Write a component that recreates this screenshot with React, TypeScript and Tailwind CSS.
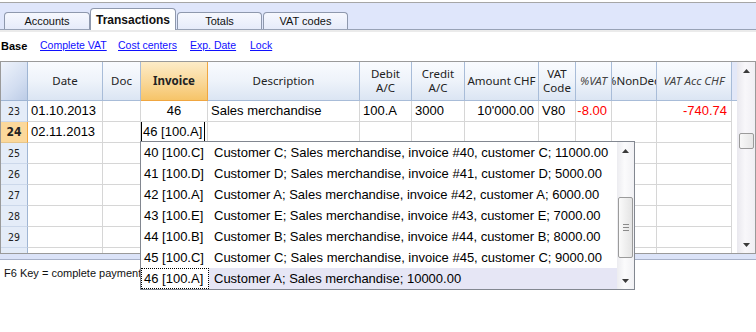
import React from "react";

const W = [27, 75, 38, 67, 152, 52, 53, 74, 37, 36, 45, 75];

function Tri({ down = false }: { down?: boolean }) {
  return (
    <svg width="7" height="4" viewBox="0 0 7 4">
      {down ? <path d="M0 0H7L3.5 4Z" fill="#3a3a3a" /> : <path d="M0 4H7L3.5 0Z" fill="#3a3a3a" />}
    </svg>
  );
}

type Cell = { t?: string; align?: "l" | "r" | "c"; red?: boolean };

const rows: { n: string; cur?: boolean; cells: Cell[] }[] = [
  {
    n: "23",
    cells: [
      { t: "01.10.2013" },
      {},
      { t: "46", align: "c" },
      { t: "Sales merchandise" },
      { t: "100.A" },
      { t: "3000" },
      { t: "10'000.00", align: "r" },
      { t: "V80" },
      { t: "-8.00", align: "r", red: true },
      {},
      { t: "-740.74", align: "r", red: true },
    ],
  },
  { n: "24", cur: true, cells: [{ t: "02.11.2013" }, {}, {}, {}, {}, {}, {}, {}, {}, {}, {}] },
  { n: "25", cells: Array(11).fill({}) },
  { n: "26", cells: Array(11).fill({}) },
  { n: "27", cells: Array(11).fill({}) },
  { n: "28", cells: Array(11).fill({}) },
  { n: "29", cells: Array(11).fill({}) },
  { n: "", cells: Array(11).fill({}) },
];

const dd = [
  ["40 [100.C]", "Customer C; Sales merchandise, invoice #40, customer C; 11000.00"],
  ["41 [100.D]", "Customer D; Sales merchandise, invoice #41, customer D; 5000.00"],
  ["42 [100.A]", "Customer A; Sales merchandise, invoice #42, customer A; 6000.00"],
  ["43 [100.E]", "Customer E; Sales merchandise, invoice #43, customer E; 7000.00"],
  ["44 [100.B]", "Customer B; Sales merchandise, invoice #44, customer B; 8000.00"],
  ["45 [100.C]", "Customer C; Sales merchandise, invoice #45, customer C; 9000.00"],
  ["46 [100.A]", "Customer A; Sales merchandise; 10000.00"],
];

function HeaderCell({ i }: { i: number }) {
  const w = W[i];
  const hf = "font-['Noto_Sans','Open_Sans',sans-serif] text-[11.5px] leading-[14px] text-[#222]";
  if (i === 0)
    return (
      <div
        style={{ width: w }}
        className="h-full shrink-0 border-r border-b border-[#9fb5d3] bg-[linear-gradient(135deg,#eef3fb,#d3def1_60%,#bccce6)]"
      />
    );
  const labels: Record<number, React.ReactNode> = {
    1: "Date",
    2: "Doc",
    3: "Invoice",
    4: "Description",
    5: (
      <>
        Debit
        <br />
        A/C
      </>
    ),
    6: (
      <>
        Credit
        <br />
        A/C
      </>
    ),
    7: "Amount CHF",
    8: (
      <>
        VAT
        <br />
        Code
      </>
    ),
    9: "%VAT",
    10: "%NonDed",
    11: "VAT Acc CHF",
  };
  const inv = i === 3;
  const ital = i === 9 || i === 11;
  return (
    <div
      style={{ width: w }}
      className={
        "h-full shrink-0 flex items-center justify-center text-center overflow-hidden whitespace-nowrap border-r border-b " +
        (inv
          ? "bg-[linear-gradient(180deg,#fdecc8,#f9d592_60%,#f6c468)] border-[#f0a640] font-bold "
          : "bg-[linear-gradient(180deg,#f9fbfe,#eef3fa_50%,#dbe5f3)] border-[#a8bcd8] ") +
        (ital ? "italic text-[#444] " : "") +
        hf
      }
    >
      <span className={ital ? "text-[#444]" : ""}>{labels[i]}</span>
    </div>
  );
}

export default function App() {
  return (
    <div className="relative w-[756px] h-[332px] overflow-hidden bg-white font-['Liberation_Sans',Arial,sans-serif] text-black">
      {/* tab bar */}
      <div className="h-[30px] bg-[#ebebeb]">
        <div className="mt-[2px] h-[28px] border-t border-b border-t-[#a6a6a6] border-b-[#98a2b6] bg-[#dfe6fb] flex items-end pl-[4px]">
          <div className="w-[86px] h-[17px] rounded-t-[4px] border border-b-0 border-[#8e98ad] bg-[linear-gradient(180deg,#f6f8fe,#e6ebfa)] flex items-center justify-center pt-[1px] text-[11px] text-[#111]">
            Accounts
          </div>
          <div className="w-[86px] h-[22px] -mb-px rounded-t-[4px] border border-b-0 border-[#8e98ad] bg-white flex items-center justify-center text-[12px] font-bold text-[#111] relative z-10">
            Transactions
          </div>
          <div className="ml-[1px] w-[85px] h-[17px] rounded-t-[4px] border border-b-0 border-[#8e98ad] bg-[linear-gradient(180deg,#f6f8fe,#e6ebfa)] flex items-center justify-center pt-[1px] text-[11px] text-[#111]">
            Totals
          </div>
          <div className="ml-[1px] w-[85px] h-[17px] rounded-t-[4px] border border-b-0 border-[#8e98ad] bg-[linear-gradient(180deg,#f6f8fe,#e6ebfa)] flex items-center justify-center pt-[1px] text-[11px] text-[#111]">
            VAT codes
          </div>
        </div>
      </div>

      {/* toolbar */}
      <div className="h-[29px] flex items-center pl-[1px] text-[10.5px] pb-[1px]">
        <span className="w-[39px] font-bold text-[11px]">Base</span>
        <span className="w-[78px] text-[#1010ff] underline">Complete VAT</span>
        <span className="w-[72px] text-[#1010ff] underline">Cost centers</span>
        <span className="w-[60px] text-[#1010ff] underline">Exp. Date</span>
        <span className="text-[#1010ff] underline">Lock</span>
      </div>

      {/* grid frame */}
      <div className="w-[756px] h-[193px] border border-[#9a9a9a] flex overflow-hidden">
        <div className="w-[731px] shrink-0 flex flex-col">
          <div className="h-[39px] flex shrink-0">
            {W.map((_, i) => (
              <HeaderCell key={i} i={i} />
            ))}
          </div>
          {rows.map((r, ri) => (
            <div key={ri} className="h-[21px] flex shrink-0 text-[13px] leading-[20px]">
              <div
                style={{ width: W[0] }}
                className={
                  "shrink-0 h-full border-r border-b flex items-center justify-center font-['DejaVu_Sans_Condensed','Liberation_Sans',sans-serif] text-[10.5px] text-[#222] " +
                  (r.cur
                    ? "bg-[#fbd89b] border-r-[#f0a640] border-b-[#e6c58a] font-bold text-[12px]"
                    : "bg-[#e4ecf8] border-r-[#9fb5d3] border-b-[#ccd8ea]")
                }
              >
                {r.n}
              </div>
              {r.cells.map((c, j) => {
                const i = j + 1;
                const editor = r.cur && i === 3;
                return (
                  <div
                    key={j}
                    style={{ width: W[i] }}
                    className={
                      "shrink-0 h-full border-r border-b border-[#d6d6d6] overflow-hidden whitespace-nowrap px-[3px] flex items-center " +
                      (c.align === "r" ? "justify-end pr-[4px] " : c.align === "c" ? "justify-center " : "") +
                      (c.red ? "text-[#ff0000] " : "") +
                      (editor ? "!p-0 items-stretch" : "")
                    }
                  >
                    {editor ? (
                      <div className="w-[64px] h-[21px] -mt-px border border-black bg-white pl-[1px] text-[13px] leading-[19px]">
                        46 [100.A]
                      </div>
                    ) : (
                      c.t
                    )}
                  </div>
                );
              })}
            </div>
          ))}
        </div>
        {/* spacer */}
        <div className="w-[5px] shrink-0 flex flex-col">
          <div className="h-[39px] bg-[#e3e8f8] border-b border-[#a8bcd8]" />
          <div className="flex-1 bg-white" />
        </div>
        {/* main scrollbar */}
        <div className="w-[18px] shrink-0 flex flex-col bg-[linear-gradient(90deg,#e9e8ee,#f8f7fa_45%,#f0eff4)]">
          <div className="h-[17px] flex items-center justify-center">
            <Tri />
          </div>
          <div className="flex-1 pt-[54px]">
            <div className="mx-auto w-[15px] h-[16px] rounded-[2px] border border-[#9b9b9b] bg-[linear-gradient(90deg,#f8f8f8,#e6e6e6)]" />
          </div>
          <div className="h-[17px] flex items-center justify-center">
            <Tri down />
          </div>
        </div>
      </div>

      {/* splitter */}
      <div className="h-[6px] bg-[#dbe3f8] border-b border-[#a7b1c8]" />

      {/* status */}
      <div className="pl-[4px] pt-[5px] text-[11px] text-[#111] whitespace-nowrap">F6 Key = complete payment</div>

      {/* dropdown */}
      <div className="absolute left-[140px] top-[141px] w-[495px] h-[149px] border border-[#828790] bg-white z-20 flex text-[13px]">
        <div className="flex-1 flex flex-col">
          {dd.map(([a, b], k) => {
            const sel = k === 6;
            return (
              <div key={a} className="h-[21px] flex items-stretch whitespace-nowrap">
                <div
                  className={
                    "w-[68px] shrink-0 pl-[2px] flex items-center " +
                    (sel ? "border border-dotted border-black" : "border border-transparent")
                  }
                >
                  {a}
                </div>
                <div className={"flex-1 pl-[5px] flex items-center overflow-hidden " + (sel ? "bg-[#e6e6f5]" : "")}>{b}</div>
              </div>
            );
          })}
        </div>
        <div className="w-[17px] shrink-0 flex flex-col bg-[linear-gradient(90deg,#ececf0,#fbfbfc_45%,#f1f1f4)]">
          <div className="h-[17px] flex items-center justify-center">
            <Tri />
          </div>
          <div className="flex-1 pt-[38px]">
            <div className="mx-auto w-[15px] h-[61px] rounded-[2px] border border-[#9b9b9b] bg-[linear-gradient(90deg,#fafafa,#e4e4e4)] flex flex-col items-center justify-center gap-[2px]">
              <div className="w-[6px] h-px bg-[#8a8a8a]" />
              <div className="w-[6px] h-px bg-[#8a8a8a]" />
              <div className="w-[6px] h-px bg-[#8a8a8a]" />
            </div>
          </div>
          <div className="h-[17px] flex items-center justify-center">
            <Tri down />
          </div>
        </div>
      </div>
    </div>
  );
}
